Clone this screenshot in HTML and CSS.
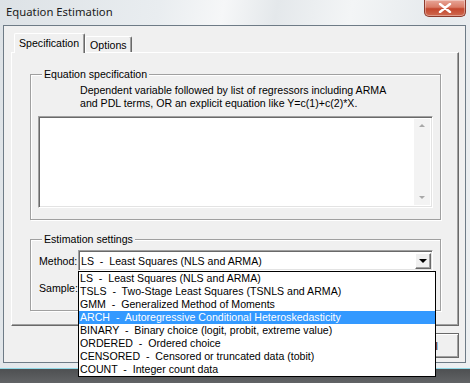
FILE: index.html
```html
<!DOCTYPE html>
<html>
<head>
<meta charset="utf-8">
<link rel="stylesheet" href="styles.css">
</head>
<body>
<div class="window">
  <div class="titlebar">
    <span class="title">Equation Estimation</span>
    <div class="close">
      <svg width="14" height="10" viewBox="0 0 14 10"><path d="M2 1 L12 9 M12 1 L2 9" stroke="#fff" stroke-width="2.4" stroke-linecap="round"/></svg>
    </div>
  </div>
  <div class="client">
    <div class="tabs">
      <div class="tab sel">Specification</div>
      <div class="tab">Options</div>
    </div>
    <div class="panel">
      <fieldset class="group spec">
        <legend>Equation specification</legend>
        <p class="desc">Dependent variable followed by list of regressors including ARMA<br>and PDL terms, OR an explicit equation like Y=c(1)+c(2)*X.</p>
        <div class="memo">
          <div class="vscroll">
            <span class="arr up"></span>
            <span class="arr down"></span>
          </div>
        </div>
      </fieldset>
      <fieldset class="group est">
        <legend>Estimation settings</legend>
        <div class="row">
          <span class="lbl">Method:</span>
          <div class="combo">
            <span class="ctext">LS  -  Least Squares (NLS and ARMA)</span>
            <span class="dropbtn"><span class="tri"></span></span>
            <ul class="droplist">
              <li>LS  -  Least Squares (NLS and ARMA)</li>
              <li>TSLS  -  Two-Stage Least Squares (TSNLS and ARMA)</li>
              <li>GMM  -  Generalized Method of Moments</li>
              <li class="hl">ARCH  -  Autoregressive Conditional Heteroskedasticity</li>
              <li>BINARY  -  Binary choice (logit, probit, extreme value)</li>
              <li>ORDERED  -  Ordered choice</li>
              <li>CENSORED  -  Censored or truncated data (tobit)</li>
              <li>COUNT  -  Integer count data</li>
            </ul>
          </div>
        </div>
        <div class="row">
          <span class="lbl">Sample:</span>
          <div class="edit"></div>
        </div>
      </fieldset>
    </div>
    <div class="buttons">
      <div class="btn">OK</div>
      <div class="btn">Cancel</div>
    </div>
  </div>
  <div class="frame-bottom"></div>
</div>
<div class="desktop"></div>
</body>
</html>
```
FILE: styles.css
```css
* { box-sizing: border-box; }
html, body { margin: 0; padding: 0; }
body {
  width: 470px;
  height: 383px;
  overflow: hidden;
  background: #5b5d5f;
  font-family: "Liberation Sans", Arial, sans-serif;
  font-size: 10.6px;
  color: #000;
}
.window {
  width: 470px;
  background: linear-gradient(100deg, #dde2e6 0%, #e9edf0 30%, #f6f7f8 42%, #e4e8eb 52%, #f3f5f6 66%, #e6eaed 82%, #edf0f2 100%);
}
.titlebar {
  height: 25px;
  display: flex;
  align-items: flex-start;
}
.title {
  font-family: "Noto Sans", "Open Sans", sans-serif;
  font-size: 11.3px;
  color: #1b1b1b;
  margin: 4px 0 0 6px;
}
.close {
  margin-left: auto;
  margin-right: 4px;
  width: 42px;
  height: 17px;
  border: 1px solid #8c3a2c;
  border-top: none;
  border-radius: 0 0 5px 5px;
  background: linear-gradient(#e8a698 0%, #d97b66 45%, #c4472e 55%, #cf6a50 100%);
  display: flex;
  align-items: center;
  justify-content: center;
  box-shadow: inset 0 0 0 1px rgba(255,255,255,0.35);
}
.client {
  margin: 0 4px 0 3px;
  height: 338px;
  border: 1px solid #6e7b86;
  background: #f0f0f0;
  padding-top: 7px;
}
.tabs {
  display: flex;
  align-items: flex-end;
  margin-left: 10px;
  height: 19px;
}
.tab {
  height: 16px;
  padding: 1px 4px 0 4px;
  border-top: 1px solid #fff;
  border-left: 1px solid #fff;
  border-right: 1px solid #696969;
  border-radius: 2px 2px 0 0;
  box-shadow: inset -1px 0 0 #a0a0a0;
  line-height: 14px;
  background: #f0f0f0;
}
.tab.sel {
  height: 20px;
  padding: 2px 5px 0 4px;
  margin-bottom: -1px;
  position: relative;
  z-index: 1;
}
.panel {
  margin: 0 6px 0 7px;
  height: 274px;
  border-top: 1px solid #fff;
  border-left: 1px solid #fff;
  border-right: 1px solid #696969;
  border-bottom: 1px solid #696969;
  box-shadow: inset -1px -1px 0 #a0a0a0;
  padding: 15px 17px 0 18px;
}
.group {
  margin: 0;
  border: 1px solid #a0a0a0;
  box-shadow: 1px 1px 0 #fff, inset 1px 1px 0 #fff;
  padding: 0 7px 0 7px;
  min-width: 0;
}
.group legend {
  padding: 0 2px;
  margin-left: 4px;
  line-height: 12px;
  height: 12px;
  background: #f0f0f0;
}
.desc {
  margin: 4px 0 0 42px;
  line-height: 13px;
  white-space: nowrap;
}
.spec { padding-bottom: 11px; }
.memo {
  margin-top: 6px;
  height: 92px;
  background: #fff;
  border-top: 1px solid #a0a0a0;
  border-left: 1px solid #a0a0a0;
  border-right: 1px solid #fff;
  border-bottom: 1px solid #fff;
  box-shadow: inset 1px 1px 0 #696969, inset -1px -1px 0 #e3e3e3;
  display: flex;
  justify-content: flex-end;
  padding: 2px;
}
.vscroll {
  width: 16px;
  background: #f3f3f3;
  display: flex;
  flex-direction: column;
  justify-content: space-between;
  align-items: center;
  padding: 5px 0 6px;
}
.arr {
  width: 0; height: 0;
  border-left: 3px solid transparent;
  border-right: 3px solid transparent;
}
.arr.up { border-bottom: 3px solid #a8a8a8; }
.arr.down { border-top: 3px solid #a8a8a8; }
.est { margin-top: 13px; padding-bottom: 8px; height: 78px; }
.row {
  display: flex;
  align-items: center;
  height: 21px;
}
.est legend + .row { margin-top: 5px; }
.row + .row { margin-top: 6px; }
.lbl { width: 40px; padding-left: 1px; }
.combo {
  position: relative;
  width: 355px;
  height: 21px;
  background: #fff;
  border-top: 1px solid #a0a0a0;
  border-left: 1px solid #a0a0a0;
  border-right: 1px solid #fff;
  border-bottom: 1px solid #fff;
  box-shadow: inset 1px 1px 0 #696969, inset -1px -1px 0 #e3e3e3;
  display: flex;
  align-items: center;
  padding-left: 2px;
}
.ctext, .droplist li { white-space: pre; }
.dropbtn {
  margin-left: auto;
  margin-right: 1px;
  width: 16px;
  height: 16px;
  background: #f0f0f0;
  border-top: 1px solid #fff;
  border-left: 1px solid #fff;
  border-right: 1px solid #696969;
  border-bottom: 1px solid #696969;
  box-shadow: inset -1px -1px 0 #a0a0a0;
  display: flex;
  align-items: center;
  justify-content: center;
}
.tri {
  width: 0; height: 0;
  border-left: 4px solid transparent;
  border-right: 4px solid transparent;
  border-top: 4px solid #000;
}
.droplist {
  position: absolute;
  left: -1px;
  top: 20px;
  width: 358px;
  margin: 0;
  padding: 0;
  list-style: none;
  background: #fff;
  border: 1px solid #000;
  z-index: 5;
}
.droplist li {
  height: 13px;
  line-height: 13px;
  padding-left: 1px;
}
.droplist li.hl { background: #3399ff; color: #fff; }
.edit {
  width: 160px;
  height: 21px;
  background: #fff;
  border-top: 1px solid #a0a0a0;
  border-left: 1px solid #a0a0a0;
  border-right: 1px solid #fff;
  border-bottom: 1px solid #fff;
  box-shadow: inset 1px 1px 0 #696969;
}
.buttons {
  display: flex;
  justify-content: flex-end;
  gap: 8px;
  margin: 7px 6px 0 0;
}
.btn {
  width: 75px;
  height: 25px;
  border: 1px solid #696969;
  background: #f0f0f0;
  display: flex;
  align-items: center;
  justify-content: center;
  box-shadow: inset 1px 1px 0 #fff, inset -1px -1px 0 #a0a0a0;
}
.frame-bottom {
  height: 6px;
  border-bottom: 1px solid #8fd8e6;
}
.desktop {
  height: 20px;
  background: linear-gradient(#4e5052, #6a6c6e);
}
```
